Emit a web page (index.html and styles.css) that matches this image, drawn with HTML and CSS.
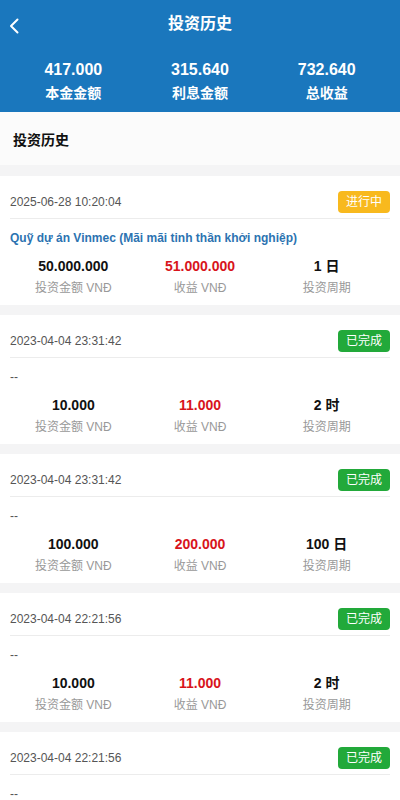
FILE: index.html
```html
<!DOCTYPE html>
<html lang="zh">
<head>
<meta charset="utf-8">
<meta name="viewport" content="width=device-width, initial-scale=1">
<title>投资历史</title>
<link rel="stylesheet" href="styles.css">
</head>
<body>
<header class="header">
  <div class="topbar">
    <span class="back">
      <svg width="10" height="16" viewBox="0 0 10 16"><path d="M8.5 1.5 L2 8 L8.5 14.5" fill="none" stroke="#fff" stroke-width="2" stroke-linecap="round" stroke-linejoin="round"/></svg>
    </span>
    <h1 class="title">投资历史</h1>
  </div>
  <div class="stats">
    <div class="stat"><div class="stat-num">417.000</div><div class="stat-label">本金金额</div></div>
    <div class="stat"><div class="stat-num">315.640</div><div class="stat-label">利息金额</div></div>
    <div class="stat"><div class="stat-num">732.640</div><div class="stat-label">总收益</div></div>
  </div>
</header>

<section class="section-head">投资历史</section>

<main class="list">
  <div class="card">
    <div class="card-top"><span class="date">2025-06-28 10:20:04</span><span class="badge badge-run">进行中</span></div>
    <div class="name">Quỹ dự án Vinmec (Mãi mãi tinh thần khởi nghiệp)</div>
    <div class="cols">
      <div class="col"><div class="num">50.000.000</div><div class="lbl">投资金额 VNĐ</div></div>
      <div class="col"><div class="num red">51.000.000</div><div class="lbl">收益 VNĐ</div></div>
      <div class="col"><div class="num">1 日</div><div class="lbl">投资周期</div></div>
    </div>
  </div>

  <div class="card">
    <div class="card-top"><span class="date">2023-04-04 23:31:42</span><span class="badge badge-done">已完成</span></div>
    <div class="name empty">--</div>
    <div class="cols">
      <div class="col"><div class="num">10.000</div><div class="lbl">投资金额 VNĐ</div></div>
      <div class="col"><div class="num red">11.000</div><div class="lbl">收益 VNĐ</div></div>
      <div class="col"><div class="num">2 时</div><div class="lbl">投资周期</div></div>
    </div>
  </div>

  <div class="card">
    <div class="card-top"><span class="date">2023-04-04 23:31:42</span><span class="badge badge-done">已完成</span></div>
    <div class="name empty">--</div>
    <div class="cols">
      <div class="col"><div class="num">100.000</div><div class="lbl">投资金额 VNĐ</div></div>
      <div class="col"><div class="num red">200.000</div><div class="lbl">收益 VNĐ</div></div>
      <div class="col"><div class="num">100 日</div><div class="lbl">投资周期</div></div>
    </div>
  </div>

  <div class="card">
    <div class="card-top"><span class="date">2023-04-04 22:21:56</span><span class="badge badge-done">已完成</span></div>
    <div class="name empty">--</div>
    <div class="cols">
      <div class="col"><div class="num">10.000</div><div class="lbl">投资金额 VNĐ</div></div>
      <div class="col"><div class="num red">11.000</div><div class="lbl">收益 VNĐ</div></div>
      <div class="col"><div class="num">2 时</div><div class="lbl">投资周期</div></div>
    </div>
  </div>

  <div class="card">
    <div class="card-top"><span class="date">2023-04-04 22:21:56</span><span class="badge badge-done">已完成</span></div>
    <div class="name empty">--</div>
    <div class="cols">
      <div class="col"><div class="num">10.000</div><div class="lbl">投资金额 VNĐ</div></div>
      <div class="col"><div class="num red">11.000</div><div class="lbl">收益 VNĐ</div></div>
      <div class="col"><div class="num">2 时</div><div class="lbl">投资周期</div></div>
    </div>
  </div>
</main>
</body>
</html>
```

FILE: styles.css
```css
* { box-sizing: border-box; }
html, body { margin: 0; padding: 0; }
body {
  background: #f4f4f5;
  font-family: "Liberation Sans", Arial, "Noto Sans CJK SC", sans-serif;
  color: #111;
}
.header {
  background: #1a77bd;
  color: #fff;
  height: 112px;
}
.topbar {
  height: 48px;
  display: flex;
  align-items: center;
  justify-content: center;
  position: relative;
}
.back {
  position: absolute;
  left: 9px;
  top: 18px;
  width: 10px;
  height: 16px;
  display: flex;
}
.title {
  margin: 0;
  font-size: 16px;
  font-weight: bold;
  line-height: 20px;
}
.stats {
  display: grid;
  grid-template-columns: 1fr 1fr 1fr;
  padding: 12px 10px 0;
}
.stat { text-align: center; }
.stat-num {
  font-size: 16px;
  font-weight: bold;
  line-height: 20px;
}
.stat-label {
  font-size: 14px;
  font-weight: bold;
  line-height: 20px;
  margin-top: 3px;
}
.section-head {
  background: #fbfbfb;
  height: 53px;
  display: flex;
  align-items: center;
  padding-left: 13px;
  font-size: 14px;
  font-weight: bold;
  color: #111;
  margin-bottom: 11px;
}
.list {
  display: flex;
  flex-direction: column;
  gap: 10px;
}
.card {
  background: #fff;
  padding: 0 10px 8px;
}
.card-top {
  display: flex;
  justify-content: space-between;
  align-items: center;
  padding: 15px 0 5px;
  border-bottom: 1px solid #ececec;
}
.date {
  font-size: 12px;
  color: #555;
}
.badge {
  height: 22px;
  line-height: 22px;
  padding: 0 8px;
  border-radius: 4px;
  font-size: 12px;
  color: #fff;
}
.badge-run { background: #f8b91e; }
.badge-done { background: #22a93a; }
.name {
  margin-top: 10px;
  font-size: 12px;
  line-height: 18px;
  font-weight: bold;
  color: #2c73b1;
}
.name.empty {
  font-weight: normal;
  color: #555;
}
.cols {
  display: grid;
  grid-template-columns: 1fr 1fr 1fr;
  margin-top: 9px;
}
.col { text-align: center; }
.num {
  font-size: 14px;
  font-weight: bold;
  line-height: 20px;
  color: #111;
}
.num.red { color: #d8141b; }
.lbl {
  margin-top: 3px;
  font-size: 12px;
  line-height: 18px;
  color: #999;
}
```
